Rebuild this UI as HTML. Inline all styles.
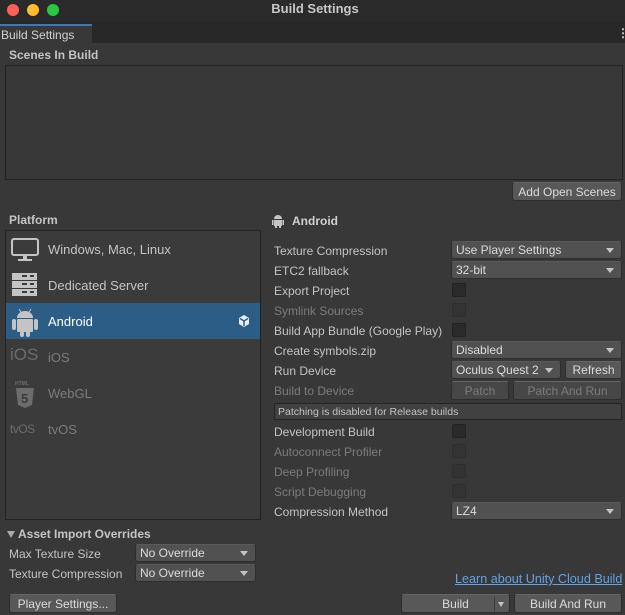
<!DOCTYPE html>
<html><head><style>
*{box-sizing:border-box;margin:0;padding:0}
body{width:625px;height:615px;background:#383838;font-family:"Liberation Sans",sans-serif;font-size:12px;color:#c4c4c4;position:relative;overflow:hidden}
.a{position:absolute;white-space:nowrap}
.dd{position:absolute;background:#515151;border-radius:3px;height:18px;color:#dcdcdc;padding:1px 0 0 4px;border:1px solid #2e2e2e;border-top-color:#5a5a5a}
.dd:after{content:"";position:absolute;right:7px;top:6px;border-left:4px solid transparent;border-right:4px solid transparent;border-top:5px solid #c4c4c4}
.btn{position:absolute;background:#585858;border-radius:3px;height:19px;color:#dcdcdc;text-align:center;padding-top:2px;border:1px solid #2e2e2e;border-top-color:#656565}
.dis{color:#7c7c7c}
.cb{position:absolute;width:14px;height:14px;background:#2a2a2a;border:1px solid #222;border-radius:2px}
.cb.d{background:#333;border-color:#2e2e2e}
.lbl{position:absolute;left:274px;white-space:nowrap}
</style></head><body>
<div class="a" style="left:0;top:0;width:625px;height:22px;background:#2a2a2a"></div>
<div class="a" style="left:7px;top:4px;width:12px;height:12px;border-radius:6px;background:#fe5f57"></div>
<div class="a" style="left:27px;top:4px;width:12px;height:12px;border-radius:6px;background:#febc2e"></div>
<div class="a" style="left:47px;top:4px;width:12px;height:12px;border-radius:6px;background:#28c840"></div>
<div class="a" style="left:0;width:630px;top:1px;text-align:center;font-weight:bold;color:#c8c8c8;font-size:13px">Build Settings</div>
<div class="a" style="left:0;top:22px;width:625px;height:21px;background:#282828"></div>
<div class="a" style="left:0;top:24px;width:92px;height:19px;background:#383838;border-top:2px solid #3a79bb;color:#d2d2d2;padding:2px 0 0 1px">Build Settings</div>
<div class="a" style="left:617px;top:26px;color:#ccc;font-weight:bold">⋮</div>
<div class="a" style="left:9px;top:48px;font-weight:bold">Scenes In Build</div>
<div class="a" style="left:5px;top:65px;width:618px;height:115px;border:1px solid #232323;background:#383838"></div>
<div class="btn" style="left:512px;top:182px;width:110px">Add Open Scenes</div>
<div class="a" style="left:9px;top:213px;font-weight:bold">Platform</div>
<div class="a" style="left:5px;top:230px;width:256px;height:290px;border:1px solid #232323;background:#3b3b3b"></div>
<div class="a" style="left:6px;top:303px;width:254px;height:36px;background:#2c5d87"></div>
<svg class="a" style="left:10px;top:237px" width="30" height="26"><rect x="2" y="2" width="26" height="16" rx="2" fill="none" stroke="#c4c4c4" stroke-width="2"/><rect x="13" y="18" width="4" height="5" fill="#c4c4c4"/><rect x="8" y="22" width="14" height="2" fill="#c4c4c4"/></svg>
<div class="a" style="left:48px;top:242px;font-size:13px">Windows, Mac, Linux</div>
<svg class="a" style="left:12px;top:273px" width="26" height="24"><rect x="0" y="0" width="25" height="7" fill="#c4c4c4"/><rect x="0" y="8" width="25" height="7" fill="#c4c4c4"/><rect x="0" y="16" width="25" height="7" fill="#c4c4c4"/><g fill="#3b3b3b"><rect x="10" y="2" width="5" height="2"/><rect x="18" y="2" width="4" height="2"/><rect x="10" y="10" width="5" height="2"/><rect x="18" y="10" width="4" height="2"/><rect x="10" y="18" width="5" height="2"/><rect x="18" y="18" width="4" height="2"/></g></svg>
<div class="a" style="left:48px;top:278px;font-size:13px">Dedicated Server</div>
<svg class="a" style="left:12px;top:307px" width="26" height="30" fill="#c4c4c4"><path d="M5 11a8 7 0 0 1 16 0z"/><rect x="5" y="12" width="16" height="13" rx="1"/><rect x="0" y="12" width="4" height="11" rx="2"/><rect x="22" y="12" width="4" height="11" rx="2"/><rect x="8" y="24" width="4" height="6" rx="2"/><rect x="14" y="24" width="4" height="6" rx="2"/><path d="M7 2l2 3M19 2l-2 3" stroke="#c4c4c4" stroke-width="1"/></svg>
<div class="a" style="left:48px;top:314px;font-size:13px;color:#fff">Android</div>
<svg class="a" style="left:238px;top:315px" width="12" height="12"><path d="M6 0L11 3V9L6 12L1 9V3Z" fill="#eee"/><path d="M6 6V11M6 6L2 3.5M6 6L10 3.5" stroke="#2c5d87" stroke-width="1.5"/></svg>
<div class="a" style="left:10px;top:345px;font-size:17px;color:#6c6c6c">iOS</div>
<div class="a" style="left:48px;top:350px;font-size:13px;color:#7c7c7c">iOS</div>
<svg class="a" style="left:15px;top:380px" width="20" height="28"><text x="0" y="5" font-size="5" fill="#6c6c6c" font-family="Liberation Sans" font-weight="bold">HTML</text><path d="M1 8h18l-2 17l-7 3l-7-3z" fill="#6c6c6c"/><text x="6" y="23" font-size="13" fill="#3b3b3b" font-weight="bold" font-family="Liberation Sans">5</text></svg>
<div class="a" style="left:48px;top:386px;font-size:13px;color:#7c7c7c">WebGL</div>
<div class="a" style="left:10px;top:422px;font-size:12px;color:#6c6c6c;letter-spacing:-0.5px">tvOS</div>
<div class="a" style="left:48px;top:422px;font-size:13px;color:#7c7c7c">tvOS</div>
<svg class="a" style="left:272px;top:214px" width="12" height="14" fill="#c4c4c4"><path d="M2 5a4 4 0 0 1 8 0z"/><rect x="2" y="6" width="8" height="6"/><rect x="0" y="6" width="1.5" height="5"/><rect x="10.5" y="6" width="1.5" height="5"/><rect x="3" y="11" width="2" height="3"/><rect x="7" y="11" width="2" height="3"/></svg>
<div class="a" style="left:292px;top:214px;font-weight:bold;color:#d0d0d0">Android</div>
<div class="lbl" style="top:244px">Texture Compression</div><div class="dd" style="left:451px;top:241px;width:171px">Use Player Settings</div>
<div class="lbl" style="top:264px">ETC2 fallback</div><div class="dd" style="left:451px;top:261px;width:171px">32-bit</div>
<div class="lbl" style="top:284px">Export Project</div><div class="cb" style="left:452px;top:283px"></div>
<div class="lbl dis" style="top:304px">Symlink Sources</div><div class="cb d" style="left:452px;top:303px"></div>
<div class="lbl" style="top:324px">Build App Bundle (Google Play)</div><div class="cb" style="left:452px;top:323px"></div>
<div class="lbl" style="top:344px">Create symbols.zip</div><div class="dd" style="left:451px;top:341px;width:171px">Disabled</div>
<div class="lbl" style="top:364px">Run Device</div><div class="dd" style="left:451px;top:361px;width:110px">Oculus Quest 2</div><div class="btn" style="left:565px;top:361px;width:57px;height:18px;padding-top:1px">Refresh</div>
<div class="lbl dis" style="top:384px">Build to Device</div><div class="btn dis" style="left:451px;top:381px;width:58px;background:#474747">Patch</div><div class="btn dis" style="left:513px;top:381px;width:109px;background:#474747">Patch And Run</div>
<div class="a" style="left:274px;top:403px;width:348px;height:17px;background:#414141;border:1px solid #242424;border-radius:2px;font-size:10.5px;padding:2px 0 0 3px">Patching is disabled for Release builds</div>
<div class="lbl" style="top:425px">Development Build</div><div class="cb" style="left:452px;top:424px"></div>
<div class="lbl dis" style="top:445px">Autoconnect Profiler</div><div class="cb d" style="left:452px;top:444px"></div>
<div class="lbl dis" style="top:465px">Deep Profiling</div><div class="cb d" style="left:452px;top:464px"></div>
<div class="lbl dis" style="top:485px">Script Debugging</div><div class="cb d" style="left:452px;top:484px"></div>
<div class="lbl" style="top:505px">Compression Method</div><div class="dd" style="left:451px;top:502px;width:171px">LZ4</div>
<div class="a" style="left:7px;top:531px;width:0;height:0;border-left:4px solid transparent;border-right:4px solid transparent;border-top:7px solid #aaa"></div>
<div class="a" style="left:18px;top:527px;font-weight:bold">Asset Import Overrides</div>
<div class="a" style="left:9px;top:547px">Max Texture Size</div><div class="dd" style="left:135px;top:544px;width:121px">No Override</div>
<div class="a" style="left:9px;top:567px">Texture Compression</div><div class="dd" style="left:135px;top:564px;width:121px">No Override</div>
<div class="a" style="left:455px;top:572px;color:#5fa3e8;text-decoration:underline;font-size:12.6px">Learn about Unity Cloud Build</div>
<div class="btn" style="left:9px;top:594px;width:108px">Player Settings...</div>
<div class="btn" style="left:401px;top:594px;width:109px;padding-left:0">Build<span style="position:absolute;left:92px;top:2px;width:1px;height:14px;background:#3a3a3a"></span><span style="position:absolute;right:5px;top:7px;border-left:3px solid transparent;border-right:3px solid transparent;border-top:5px solid #c4c4c4"></span></div>
<div class="btn" style="left:514px;top:594px;width:108px">Build And Run</div>
</body></html>
